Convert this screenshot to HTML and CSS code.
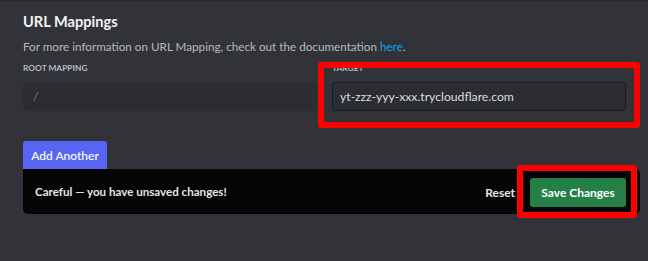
FILE: index.html
```
<!DOCTYPE html>
<html lang="en">
<head>
  <meta charset="UTF-8">
  <title>URL Mappings</title>
  <link rel="stylesheet" href="styles.css">
</head>
<body>
  <div class="page">
    <h2 class="title">URL Mappings</h2>
    <p class="desc">For more information on URL Mapping, check out the documentation <a href="#">here</a>.</p>

    <div class="mappings">
      <div class="field">
        <label>Root Mapping</label>
        <div class="input input-muted">/</div>
      </div>
      <div class="field">
        <label>Target</label>
        <div class="input input-focus">yt-zzz-yyy-xxx.trycloudflare.com</div>
      </div>
    </div>

    <button class="add-button">Add Another</button>

    <div class="notice">
      <span class="notice-text">Careful &mdash; you have unsaved changes!</span>
      <div class="notice-actions">
        <button class="reset-button">Reset</button>
        <button class="save-button">Save Changes</button>
      </div>
    </div>

    <!-- highlight boxes drawn over the screenshot -->
    <div class="mark mark-target"></div>
    <div class="mark mark-save"></div>
  </div>
</body>
</html>
```

FILE: styles.css
```
body {
  margin: 0;
  padding: 0;
  background-color: #313338;
  font-family: Lato, "Noto Sans", sans-serif;
  color: #dbdee1;
}
.page {
  position: relative;
  height: 260px;
  border-top: 1px solid #2a2c30;
  padding: 11px 0 0 23px;
  box-sizing: border-box;
}
.title {
  margin: 0;
  font-size: 14.6px;
  line-height: 20px;
  font-weight: 700;
  color: #f2f3f5;
}
.desc {
  margin: 6px 0 0;
  font-size: 11.7px;
  line-height: 16px;
  color: #b5bac1;
}
.desc a {
  color: #00a8fc;
  text-decoration: none;
}
.mappings {
  display: grid;
  grid-template-columns: 294px 294px;
  column-gap: 15px;
  margin-top: 8px;
}
.field label {
  display: block;
  font-size: 8.4px;
  line-height: 12px;
  font-weight: 700;
  text-transform: uppercase;
  color: #b5bac1;
}
.input {
  margin-top: 8px;
  height: 29px;
  box-sizing: border-box;
  padding: 0 9px;
  border-radius: 3px;
  font-size: 12.2px;
  line-height: 27px;
  background-color: #2b2d31;
  border: 1px solid #2b2d31;
}
.input-muted {
  color: #80848e;
}
.input-focus {
  border-color: #1a1b1e;
  color: #dbdee1;
  padding-left: 7px;
}
.add-button {
  display: block;
  margin-top: 30px;
  width: 84px;
  height: 28px;
  padding: 0;
  border: none;
  border-radius: 3px 3px 0 0;
  background-color: #5865f2;
  color: #ffffff;
  font-family: inherit;
  font-size: 12px;
  font-weight: 500;
}
.notice {
  display: flex;
  align-items: center;
  justify-content: space-between;
  width: 617px;
  height: 45px;
  box-sizing: border-box;
  padding: 0 14px 0 12px;
  background-color: #050505;
  border-radius: 0 5px 5px 5px;
}
.notice-text {
  font-size: 11.6px;
  font-weight: 700;
  color: #e3e5e8;
}
.notice-actions {
  display: flex;
  align-items: center;
  gap: 15px;
  margin-top: 2px;
}
.reset-button {
  background: transparent;
  border: none;
  padding: 0;
  color: #e3e5e8;
  font-family: inherit;
  font-size: 12px;
  font-weight: 700;
}
.save-button {
  width: 96px;
  height: 29px;
  border: none;
  border-radius: 3px;
  background-color: #248046;
  color: #ffffff;
  font-family: inherit;
  font-size: 12px;
  font-weight: 700;
}
.mark {
  position: absolute;
  border: 6px solid #ff0000;
  border-radius: 3px;
  box-sizing: border-box;
}
.mark-target {
  left: 318px;
  top: 61px;
  width: 322px;
  height: 66px;
}
.mark-save {
  left: 517px;
  top: 164px;
  width: 120px;
  height: 53px;
}
```
